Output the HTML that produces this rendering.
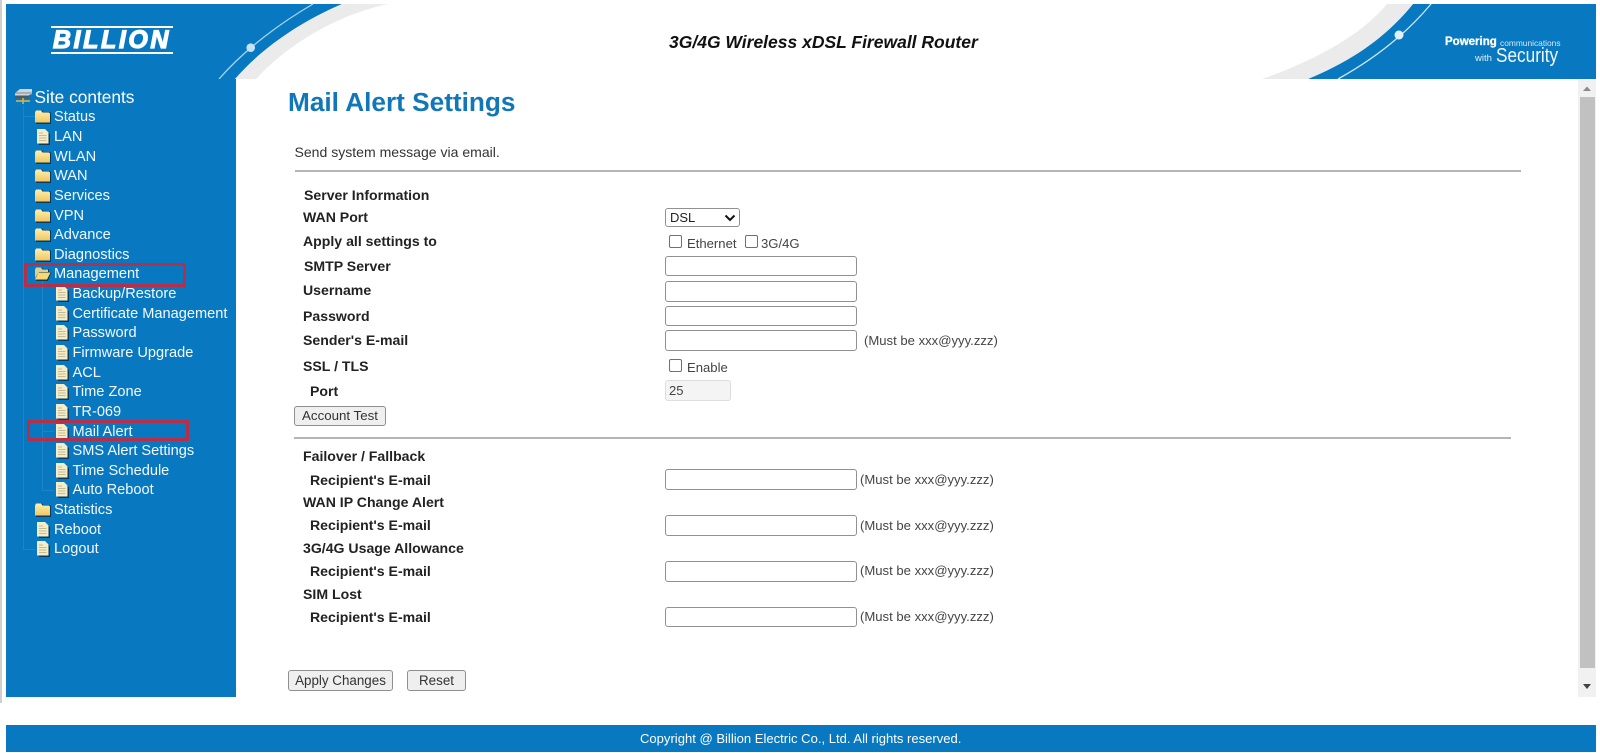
<!DOCTYPE html>
<html><head><meta charset="utf-8"><title>Mail Alert Settings</title>
<style>
html,body{margin:0;padding:0;background:#fff;width:1600px;height:753px;overflow:hidden}
body{position:relative;font-family:"Liberation Sans",Arial,sans-serif;font-size:14px;color:#333}
.a{position:absolute}
.l{position:absolute;font-weight:bold;color:#222;font-size:14.1px;line-height:20px;height:20px;white-space:nowrap}
.i{position:absolute;box-sizing:border-box;left:665px;width:192px;border:1px solid #919191;border-radius:3px;background:#fff}
.m{position:absolute;font-size:13.1px;line-height:18px;color:#444;white-space:nowrap}
.c{position:absolute;box-sizing:border-box;width:13px;height:13px;border:1px solid #707070;border-radius:2px;background:#fff}
.b{position:absolute;box-sizing:border-box;border:1px solid #8f8f8f;border-radius:3px;background:#efefef;font-size:13.3px;text-align:center;color:#333}
.t{position:absolute;left:0;top:107.3px;width:235px;color:#f4f9fd;font-size:14.6px}
.r{position:relative;height:19.65px;line-height:20px;white-space:nowrap}
.r svg{position:absolute;top:2px;left:35px}
.r span{position:absolute;left:54px;top:0}
.s svg{left:54.5px}
.s span{left:72.5px}
.ln{position:absolute;background:#1f84c5}
</style></head><body>
<svg width="0" height="0" style="position:absolute"><defs>
<linearGradient id="g" x1="0" y1="0" x2="0" y2="1"><stop offset="0" stop-color="#ffefb0"/><stop offset="1" stop-color="#f0c860"/></linearGradient>
<symbol id="fo" viewBox="0 0 16 15"><path d="M1 3L2 1.5H7L8.5 3H15L16 4V15H1Z" fill="#0d3a5c"/><path d="M0 3.5L1 1.5H6L7.5 3.5H14L15 4.5V13.5H0Z" fill="url(#g)"/></symbol>
<symbol id="of" viewBox="0 0 16 15"><path d="M1 3L2 1.5H7L8.5 3H14V6H16.5L13 15H1Z" fill="#0d3a5c"/><path d="M0 3.5L1 1.5H6L7.5 3.5H13V6H4L0 12Z" fill="#e0cf90"/><path d="M3.5 6.5H15.5L12 13.5H0Z" fill="#f8d870"/></symbol>
<symbol id="do" viewBox="0 0 14 16"><path d="M3 1.5H10L14 5V16H3Z" fill="#0d3a5c"/><path d="M1 0H9L12.5 3.5V14.5H1Z" fill="#f5edc8"/><path d="M3 4H7M3 6.5H10.5M3 9H10.5M3 11.5H10.5" stroke="#c4bb97" stroke-width="1"/></symbol>
</defs></svg>

<div class="a" style="left:0;top:0;width:2px;height:703px;background:#cfcfcf"></div>

<!-- header -->
<svg class="a" style="left:0;top:0" width="1600" height="80" viewBox="0 0 1600 80">
<path d="M6 4H342C300 22 262 48 235 79H6Z" fill="#0879c1"/>
<path d="M388 4C340 14 290 42 256 79H235C262 48 300 22 342 4Z" fill="#ebebeb"/>
<path d="M313 4C282 22 246 48 219 79" fill="none" stroke="#a9d3ee" stroke-width="1.3"/>
<circle cx="250.7" cy="47.7" r="4.3" fill="#c6e2f4"/>
<path d="M1596 4H1413C1387 36 1354 60 1308 79H1596Z" fill="#0879c1"/>
<path d="M1387 4C1360 36 1316 60 1262 79H1308C1354 60 1387 36 1413 4Z" fill="#ebebeb"/>
<path d="M1431 4C1406 34 1376 58 1338 79" fill="none" stroke="#cfe6f5" stroke-width="1.3"/>
<circle cx="1399" cy="35" r="4.5" fill="#e0eff9"/>
</svg>
<div class="a" style="left:51px;top:26px;width:122px;height:2px;background:#fff"></div>
<div class="a" style="left:51px;top:51.5px;width:122px;height:2.5px;background:#fff"></div>
<div class="a" style="left:51px;top:25px;width:122px;height:30px;line-height:30px;text-align:center;color:#fff;font-weight:bold;font-style:italic;font-size:25px;letter-spacing:2.6px;-webkit-text-stroke:1.2px #fff;white-space:nowrap">BILLION</div>
<div class="a" style="left:669px;top:32px;line-height:20px;white-space:nowrap;color:#111;font-weight:bold;font-style:italic;font-size:17.5px">3G/4G Wireless xDSL Firewall Router</div>
<div class="a" style="left:1445px;top:34px;line-height:16px;color:#fff;font-weight:bold;font-size:11.5px;-webkit-text-stroke:.3px #fff;white-space:nowrap">Powering</div>
<div class="a" style="left:1500px;top:35px;line-height:16px;color:#d5e9f6;font-size:8.4px;white-space:nowrap">communications</div>
<div class="a" style="left:1475px;top:51px;line-height:16px;color:#e4f1fa;font-size:9.5px;white-space:nowrap">with</div>
<div class="a" style="left:1496px;top:44px;line-height:24px;color:#f2f8fc;font-size:20px;transform:scaleX(.86);transform-origin:0 50%;white-space:nowrap">Security</div>

<!-- sidebar -->
<div class="a" style="left:6px;top:79px;width:230px;height:618px;background:#0879c1"></div>
<div class="ln" style="left:23px;top:105px;width:1px;height:444px"></div>
<div class="ln" style="left:42px;top:280px;width:1px;height:210px"></div>
<div class="ln" style="left:23px;top:116px;width:12px;height:1px"></div>
<div class="ln" style="left:23px;top:549px;width:12px;height:1px"></div>
<div class="ln" style="left:42px;top:490px;width:12px;height:1px"></div>
<div class="ln" style="left:42px;top:431px;width:12px;height:1px"></div>
<svg class="a" style="left:14px;top:88px" width="19" height="17" viewBox="0 0 19 17"><path d="M1 5L6 1H18V6L15 7V8H1Z" fill="#cfd5da"/><path d="M1 5H18" stroke="#7f8b95"/><path d="M1 7.5H15V10.5H1Z" fill="#4e5a64"/><path d="M2 13H16" stroke="#d8b94a" stroke-width="1.5"/><path d="M9 10V16" stroke="#d8b94a" stroke-width="1.5"/></svg>
<div class="a" style="left:34.5px;top:86.3px;line-height:22px;color:#fff;font-size:17.3px;white-space:nowrap">Site contents</div>

<div class="t">
<div class="r"><svg width="16" height="15"><use href="#fo"/></svg><span>Status</span></div>
<div class="r"><svg width="14" height="16" style="left:36px"><use href="#do"/></svg><span>LAN</span></div>
<div class="r"><svg width="16" height="15"><use href="#fo"/></svg><span>WLAN</span></div>
<div class="r"><svg width="16" height="15"><use href="#fo"/></svg><span>WAN</span></div>
<div class="r"><svg width="16" height="15"><use href="#fo"/></svg><span>Services</span></div>
<div class="r"><svg width="16" height="15"><use href="#fo"/></svg><span>VPN</span></div>
<div class="r"><svg width="16" height="15"><use href="#fo"/></svg><span>Advance</span></div>
<div class="r"><svg width="16" height="15"><use href="#fo"/></svg><span>Diagnostics</span></div>
<div class="r"><svg width="16" height="15"><use href="#of"/></svg><span>Management</span></div>
<div class="r s"><svg width="14" height="16"><use href="#do"/></svg><span>Backup/Restore</span></div>
<div class="r s"><svg width="14" height="16"><use href="#do"/></svg><span>Certificate Management</span></div>
<div class="r s"><svg width="14" height="16"><use href="#do"/></svg><span>Password</span></div>
<div class="r s"><svg width="14" height="16"><use href="#do"/></svg><span>Firmware Upgrade</span></div>
<div class="r s"><svg width="14" height="16"><use href="#do"/></svg><span>ACL</span></div>
<div class="r s"><svg width="14" height="16"><use href="#do"/></svg><span>Time Zone</span></div>
<div class="r s"><svg width="14" height="16"><use href="#do"/></svg><span>TR-069</span></div>
<div class="r s"><svg width="14" height="16"><use href="#do"/></svg><span>Mail Alert</span></div>
<div class="r s"><svg width="14" height="16"><use href="#do"/></svg><span>SMS Alert Settings</span></div>
<div class="r s"><svg width="14" height="16"><use href="#do"/></svg><span>Time Schedule</span></div>
<div class="r s"><svg width="14" height="16"><use href="#do"/></svg><span>Auto Reboot</span></div>
<div class="r"><svg width="16" height="15"><use href="#fo"/></svg><span>Statistics</span></div>
<div class="r"><svg width="14" height="16" style="left:36px"><use href="#do"/></svg><span>Reboot</span></div>
<div class="r"><svg width="14" height="16" style="left:36px"><use href="#do"/></svg><span>Logout</span></div>
</div>
<div class="a" style="left:24px;top:263px;width:162px;height:24px;box-sizing:border-box;border:3px solid #b52f4b"></div>
<div class="a" style="left:27px;top:420px;width:162px;height:21px;box-sizing:border-box;border:3px solid #b52f4b"></div>

<!-- content -->
<div class="a" style="left:288px;top:86px;line-height:32px;color:#1177b9;font-weight:bold;font-size:26.2px;white-space:nowrap">Mail Alert Settings</div>
<div class="a" style="left:294.5px;top:142px;line-height:20px;color:#333;font-size:14.05px;white-space:nowrap">Send system message via email.</div>
<div class="a" style="left:295px;top:170px;width:1226px;height:1.5px;background:#b5b5b5"></div>

<div class="l" style="left:304px;top:185px">Server Information</div>
<div class="l" style="left:303px;top:207px">WAN Port</div>
<div class="l" style="left:303px;top:231px">Apply all settings to</div>
<div class="l" style="left:304px;top:256px">SMTP Server</div>
<div class="l" style="left:303px;top:280px">Username</div>
<div class="l" style="left:303px;top:305.5px">Password</div>
<div class="l" style="left:303px;top:330px">Sender's E-mail</div>
<div class="l" style="left:303px;top:355.5px">SSL / TLS</div>
<div class="l" style="left:310px;top:381px">Port</div>

<div class="i" style="width:75px;top:208px;height:19px;font-size:13px;line-height:17px;padding-left:4px;color:#222">DSL<svg class="a" style="left:58px;top:5px" width="12" height="8"><path d="M1.5 1.5L6 6L10.5 1.5" fill="none" stroke="#111" stroke-width="2"/></svg></div>
<div class="c" style="left:669px;top:235px"></div>
<div class="m" style="left:687px;top:234.5px">Ethernet</div>
<div class="c" style="left:745px;top:235px"></div>
<div class="m" style="left:761px;top:234.5px">3G/4G</div>
<div class="i" style="top:256px;height:20px"></div>
<div class="i" style="top:281px;height:21px"></div>
<div class="i" style="top:306px;height:20px"></div>
<div class="i" style="top:330px;height:21px"></div>
<div class="m" style="left:864px;top:332px">(Must be xxx@yyy.zzz)</div>
<div class="c" style="left:669px;top:359px"></div>
<div class="m" style="left:687px;top:359px">Enable</div>
<div class="i" style="top:380px;height:21px;width:66px;background:#f4f4f4;border-color:#ddd;font-size:13px;line-height:19px;padding-left:3px;color:#444">25</div>
<div class="b" style="left:294px;top:406px;width:92px;height:20px;line-height:18px">Account Test</div>
<div class="a" style="left:294px;top:437px;width:1217px;height:1.5px;background:#b5b5b5"></div>

<div class="l" style="left:303px;top:446px">Failover / Fallback</div>
<div class="l" style="left:310px;top:470px">Recipient's E-mail</div>
<div class="l" style="left:303px;top:492px">WAN IP Change Alert</div>
<div class="l" style="left:310px;top:515px">Recipient's E-mail</div>
<div class="l" style="left:303px;top:538px">3G/4G Usage Allowance</div>
<div class="l" style="left:310px;top:561px">Recipient's E-mail</div>
<div class="l" style="left:303px;top:584px">SIM Lost</div>
<div class="l" style="left:310px;top:607px">Recipient's E-mail</div>

<div class="i" style="top:469px;height:21px"></div>
<div class="m" style="left:860px;top:471px">(Must be xxx@yyy.zzz)</div>
<div class="i" style="top:515px;height:21px"></div>
<div class="m" style="left:860px;top:517px">(Must be xxx@yyy.zzz)</div>
<div class="i" style="top:561px;height:21px"></div>
<div class="m" style="left:860px;top:562px">(Must be xxx@yyy.zzz)</div>
<div class="i" style="top:607px;height:20px"></div>
<div class="m" style="left:860px;top:608px">(Must be xxx@yyy.zzz)</div>

<div class="b" style="left:288px;top:670px;width:105px;height:21px;line-height:19px;font-size:13.4px">Apply Changes</div>
<div class="b" style="left:407px;top:670px;width:59px;height:21px;line-height:19px;font-size:13.4px">Reset</div>

<!-- scrollbar -->
<div class="a" style="left:1578px;top:79px;width:18px;height:618px;background:#f1f1f1"></div>
<div class="a" style="left:1580px;top:97px;width:15px;height:571px;background:#c1c1c1"></div>
<svg class="a" style="left:1582px;top:85px" width="10" height="7"><path d="M1 6L5 1.5L9 6Z" fill="#8a8a8a"/></svg>
<svg class="a" style="left:1582px;top:683px" width="10" height="7"><path d="M1 1H9L5 6Z" fill="#444"/></svg>

<!-- footer -->
<div class="a" style="left:6px;top:725px;width:1590px;height:27px;background:#0879c1"></div>
<div class="a" style="left:640px;top:729px;line-height:20px;color:#fff;font-size:13.05px;white-space:nowrap">Copyright @ Billion Electric Co., Ltd. All rights reserved.</div>
</body></html>
